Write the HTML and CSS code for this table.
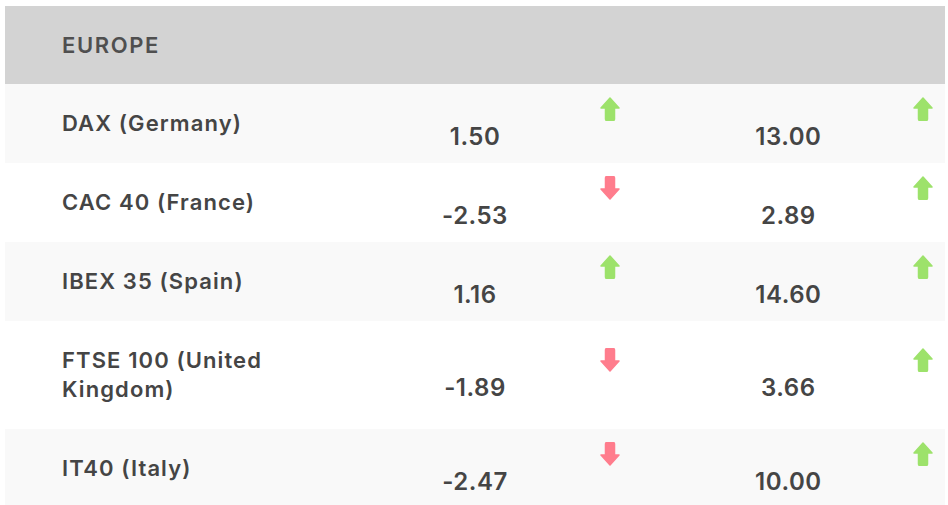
FILE: index.html
```html
<!DOCTYPE html>
<html>
<head>
<meta charset="utf-8">
<link rel="stylesheet" href="styles.css">
</head>
<body>
<div class="wrap">
  <div class="table">
    <div class="head">EUROPE</div>

    <div class="row alt">
      <div class="name">DAX (Germany)</div>
      <div class="val"><svg class="arrow up" viewBox="0 0 20 24"><use href="#up"/></svg><span class="num">1.50</span></div>
      <div class="val"><svg class="arrow up" viewBox="0 0 20 24"><use href="#up"/></svg><span class="num">13.00</span></div>
    </div>

    <div class="row">
      <div class="name">CAC 40 (France)</div>
      <div class="val"><svg class="arrow down" viewBox="0 0 20 24"><use href="#up"/></svg><span class="num">-2.53</span></div>
      <div class="val"><svg class="arrow up" viewBox="0 0 20 24"><use href="#up"/></svg><span class="num">2.89</span></div>
    </div>

    <div class="row alt">
      <div class="name">IBEX 35 (Spain)</div>
      <div class="val"><svg class="arrow up" viewBox="0 0 20 24"><use href="#up"/></svg><span class="num">1.16</span></div>
      <div class="val"><svg class="arrow up" viewBox="0 0 20 24"><use href="#up"/></svg><span class="num">14.60</span></div>
    </div>

    <div class="row">
      <div class="name">FTSE 100 (United Kingdom)</div>
      <div class="val"><svg class="arrow down" viewBox="0 0 20 24"><use href="#up"/></svg><span class="num">-1.89</span></div>
      <div class="val"><svg class="arrow up" viewBox="0 0 20 24"><use href="#up"/></svg><span class="num">3.66</span></div>
    </div>

    <div class="row alt">
      <div class="name">IT40 (Italy)</div>
      <div class="val"><svg class="arrow down" viewBox="0 0 20 24"><use href="#up"/></svg><span class="num">-2.47</span></div>
      <div class="val"><svg class="arrow up" viewBox="0 0 20 24"><use href="#up"/></svg><span class="num">10.00</span></div>
    </div>
  </div>
</div>
<svg class="defs" width="0" height="0">
  <defs>
    <path id="up" d="M10 1 L19 11 H14.5 V22 a1.5 1.5 0 0 1 -1.5 1.5 H7 a1.5 1.5 0 0 1 -1.5 -1.5 V11 H1 Z" stroke-linejoin="round" stroke-width="1.5"/>
  </defs>
</svg>
</body>
</html>
```
FILE: styles.css
```css
html, body {
  margin: 0;
  padding: 0;
  background: #ffffff;
}
body {
  font-family: "Inter", "Noto Sans", sans-serif;
  font-weight: 600;
  color: #454545;
}
.wrap {
  padding: 6px 3px 0 5px;
}
.table {
  width: 940px;
}
.head {
  background: #d3d3d3;
  height: 78px;
  display: flex;
  align-items: center;
  padding-left: 57px;
  font-size: 22px;
  letter-spacing: 1.6px;
  color: #4f4f4f;
}
.row {
  display: grid;
  grid-template-columns: 1fr 1fr 1fr;
  background: #ffffff;
}
.row.alt {
  background: #f9f9f9;
}
.name {
  padding: 25px 26px 25px 57px;
  font-size: 22px;
  letter-spacing: 1.1px;
  line-height: 29px;
  display: flex;
  align-items: center;
}
.val {
  display: flex;
  flex-direction: column;
  justify-content: center;
}
.arrow {
  width: 20px;
  height: 24px;
  align-self: flex-end;
  margin-right: 12px;
}
.arrow.up {
  fill: #9de26b;
  stroke: #9de26b;
}
.arrow.down {
  fill: #ff7d8d;
  stroke: #ff7d8d;
  transform: rotate(180deg);
}
.num {
  text-align: center;
  font-size: 24px;
  letter-spacing: 0.5px;
  line-height: 28px;
  margin-top: 2px;
}
.defs {
  position: absolute;
}
```
